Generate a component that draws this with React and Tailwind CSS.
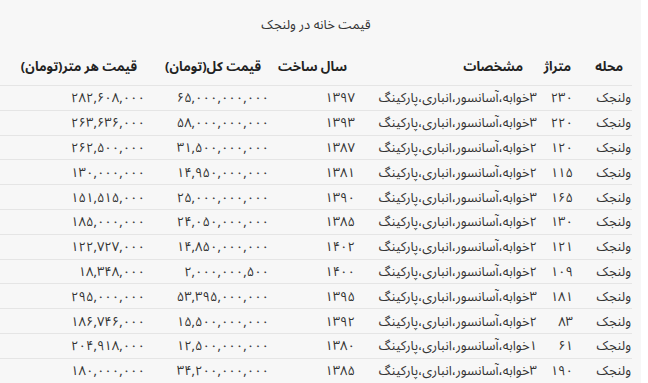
import React from "react";

const rows = [
  ["ولنجک", "۲۳۰", "۳خوابه،آسانسور،انباری،پارکینگ", "۱۳۹۷", "۶۵,۰۰۰,۰۰۰,۰۰۰", "۲۸۲,۶۰۸,۰۰۰"],
  ["ولنجک", "۲۲۰", "۳خوابه،آسانسور،انباری،پارکینگ", "۱۳۹۳", "۵۸,۰۰۰,۰۰۰,۰۰۰", "۲۶۳,۶۳۶,۰۰۰"],
  ["ولنجک", "۱۲۰", "۲خوابه،آسانسور،انباری،پارکینگ", "۱۳۸۷", "۳۱,۵۰۰,۰۰۰,۰۰۰", "۲۶۲,۵۰۰,۰۰۰"],
  ["ولنجک", "۱۱۵", "۲خوابه،آسانسور،انباری،پارکینگ", "۱۳۸۱", "۱۴,۹۵۰,۰۰۰,۰۰۰", "۱۳۰,۰۰۰,۰۰۰"],
  ["ولنجک", "۱۶۵", "۳خوابه،آسانسور،انباری،پارکینگ", "۱۳۹۰", "۲۵,۰۰۰,۰۰۰,۰۰۰", "۱۵۱,۵۱۵,۰۰۰"],
  ["ولنجک", "۱۳۰", "۲خوابه،آسانسور،انباری،پارکینگ", "۱۳۸۵", "۲۴,۰۵۰,۰۰۰,۰۰۰", "۱۸۵,۰۰۰,۰۰۰"],
  ["ولنجک", "۱۲۱", "۲خوابه،آسانسور،انباری،پارکینگ", "۱۴۰۲", "۱۴,۸۵۰,۰۰۰,۰۰۰", "۱۲۲,۷۲۷,۰۰۰"],
  ["ولنجک", "۱۰۹", "۲خوابه،آسانسور،انباری،پارکینگ", "۱۴۰۰", "۲,۰۰۰,۰۰۰,۵۰۰", "۱۸,۳۴۸,۰۰۰"],
  ["ولنجک", "۱۸۱", "۳خوابه،آسانسور،انباری،پارکینگ", "۱۳۹۵", "۵۳,۳۹۵,۰۰۰,۰۰۰", "۲۹۵,۰۰۰,۰۰۰"],
  ["ولنجک", "۸۳", "۲خوابه،آسانسور،انباری،پارکینگ", "۱۳۹۲", "۱۵,۵۰۰,۰۰۰,۰۰۰", "۱۸۶,۷۴۶,۰۰۰"],
  ["ولنجک", "۶۱", "۱خوابه،آسانسور،انباری،پارکینگ", "۱۳۸۰", "۱۲,۵۰۰,۰۰۰,۰۰۰", "۲۰۴,۹۱۸,۰۰۰"],
  ["ولنجک", "۱۹۰", "۳خوابه،آسانسور،انباری،پارکینگ", "۱۳۸۵", "۳۴,۲۰۰,۰۰۰,۰۰۰", "۱۸۰,۰۰۰,۰۰۰"],
];

const headers = ["محله", "متراژ", "مشخصات", "سال ساخت", "قیمت کل(تومان)", "قیمت هر متر(تومان)"];

export default function App() {
  return (
    <div className="bg-white h-[383px] overflow-hidden">
      <div
        className="w-[641px] h-[383px] bg-[#f7f7f7] text-[#333] text-[13px] leading-[18px]"
        style={{ fontFamily: '"Noto Sans Arabic", "DejaVu Sans", sans-serif' }}
      >
        <div dir="rtl" className="w-[632px]">
          <div className="h-[47px] pt-[2px] flex items-center justify-center text-[#333]">
            قیمت خانه در ولنجک
          </div>
          <div className="h-[39px] pt-[2px] grid grid-cols-[52px_40px_175px_85px_120px_160px] items-center font-bold text-[#222] border-b border-[#e5e5e5]">
            <div className="pr-[9px] text-right whitespace-nowrap">{headers[0]}</div>
            <div className="pr-[9px] text-right whitespace-nowrap">{headers[1]}</div>
            <div className="pr-[17px] text-right whitespace-nowrap">{headers[2]}</div>
            <div className="pr-[18px] text-right whitespace-nowrap">{headers[3]}</div>
            <div className="pr-[19px] text-right whitespace-nowrap">{headers[4]}</div>
            <div className="pr-[23px] text-right whitespace-nowrap">{headers[5]}</div>
          </div>
          {rows.map((r, i) => (
            <div
              key={i}
              className="h-[24.8px] pt-[1px] grid grid-cols-[52px_40px_175px_85px_120px_160px] items-center border-b border-[#e5e5e5] whitespace-nowrap"
            >
              <div className="pr-[1px] text-right">{r[0]}</div>
              <div className="pr-[7px] text-right">{r[1]}</div>
              <div className="pr-[3px] text-right">{r[2]}</div>
              <div className="pr-[10px] text-right">{r[3]}</div>
              <div className="pr-[11px] text-right tracking-[-0.6px]">{r[4]}</div>
              <div className="pr-[15px] text-right tracking-[-0.6px]">{r[5]}</div>
            </div>
          ))}
        </div>
      </div>
    </div>
  );
}
